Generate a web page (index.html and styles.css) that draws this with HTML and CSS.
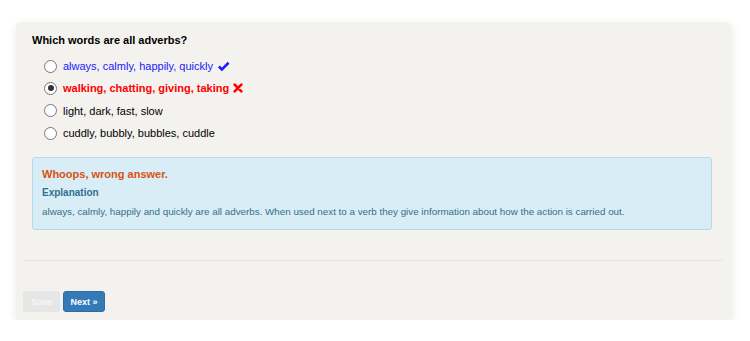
FILE: index.html
```html
<!DOCTYPE html>
<html>
<head>
<meta charset="utf-8">
<title>Quiz</title>
<link rel="stylesheet" href="styles.css">
</head>
<body>
<div class="card">
	<div class="question">
		<h3 class="q-title">Which words are all adverbs?</h3>
		<ul class="options">
			<li class="opt correct"><span class="radio"></span>always, calmly, happily, quickly
				<svg class="mark" width="13" height="11" viewBox="0 0 15 12"><path d="M1 7 L3.5 4.8 L5.6 7.3 L12.3 0.6 L14.4 2.7 L5.6 11.4 Z" fill="#1a1aff"/></svg>
			</li>
			<li class="opt wrong"><span class="radio checked"></span>walking, chatting, giving, taking
				<svg class="mark" width="10" height="10" viewBox="0 0 12 12"><path d="M2 2 L10 10 M10 2 L2 10" stroke="#f00" stroke-width="3.2" stroke-linecap="round"/></svg>
			</li>
			<li class="opt"><span class="radio"></span>light, dark, fast, slow</li>
			<li class="opt"><span class="radio"></span>cuddly, bubbly, bubbles, cuddle</li>
		</ul>
		<div class="alert">
			<h4 class="alert-title">Whoops, wrong answer.</h4>
			<h5 class="alert-sub">Explanation</h5>
			<p class="alert-text">always, calmly, happily and quickly are all adverbs. When used next to a verb they give information about how the action is carried out.</p>
		</div>
	</div>
	<hr class="sep">
	<div class="buttons">
		<button class="btn btn-save">Save</button>
		<button class="btn btn-next">Next &raquo;</button>
	</div>
</div>
</body>
</html>
```

FILE: styles.css
```css
*{ margin:0; padding:0; box-sizing:border-box;}
body{ background:#fff; font-family:"Liberation Sans", Arial, sans-serif; color:#000; padding:22px 18px 0 16px;}
.card{ background:#f3f2ee; border-radius:6px; box-shadow:0 3px 10px rgba(0,0,0,0.09); padding:11px 10px 9px 7px; height:298px;}
.question{ padding:0 10px 0 9px;}
.q-title{ font-size:11px; font-weight:bold; line-height:14px; margin-bottom:8px;}
.options{ list-style:none; padding-left:12px;}
.opt{ display:flex; align-items:center; font-size:11px; line-height:14px; height:22.3px;}
.radio{ width:13px; height:13px; border:1px solid #767676; border-radius:50%; background:#fff; margin-right:6px; display:flex; align-items:center; justify-content:center;}
.radio.checked::after{ content:""; width:6px; height:6px; border-radius:50%; background:#333;}
.correct{ color:#1a1aff;}
.wrong{ color:#f00; font-weight:bold;}
.mark{ margin-left:4px;}
.alert{ margin-top:13px; background:#d9edf7; border:1px solid #b5dcec; border-radius:3px; padding:9px 9px 10px 9px; color:#31708f;}
.alert-title{ font-size:11px; color:#d9530e; font-weight:bold; line-height:14px; margin-bottom:5px;}
.alert-sub{ font-size:10px; font-weight:bold; line-height:14px; margin-bottom:5px;}
.alert-text{ font-size:9.8px; line-height:14px;}
.sep{ border:0; border-top:1px solid #e3e1dc; margin-top:30px;}
.buttons{ display:flex; gap:3px; margin-top:30px;}
.btn{ font-family:inherit; font-size:9px; font-weight:bold; color:#fff; border-radius:3px; height:21px; padding:0 4px; border:1px solid transparent; white-space:nowrap;}
.btn-save{ background:#e6e6e6; width:37px; color:#f6f6f6;}
.btn-next{ background:#337ab7; border-color:#2e6da4; width:42px;}
```
